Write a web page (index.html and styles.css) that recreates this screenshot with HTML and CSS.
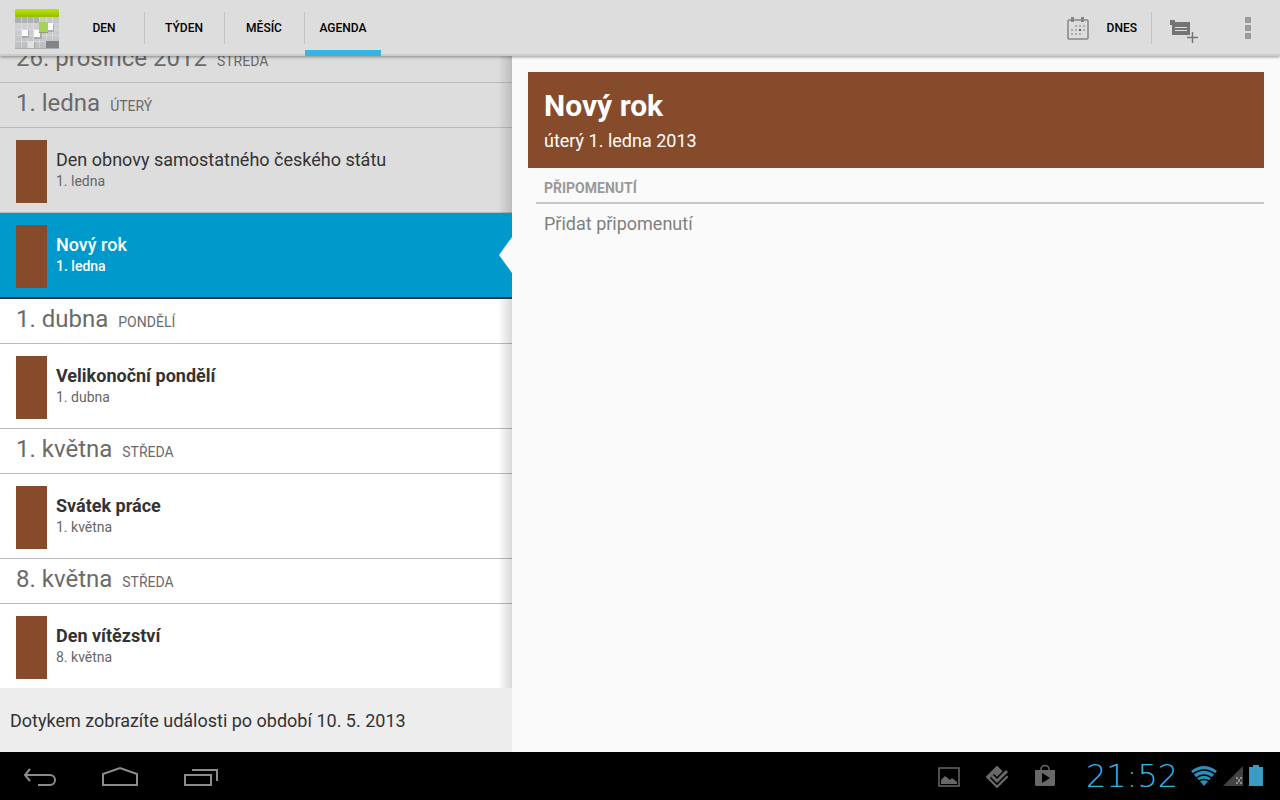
FILE: index.html
```
<!DOCTYPE html>
<html lang="cs">
<head>
    <meta charset="UTF-8">
    <meta name="viewport" content="width=device-width, initial-scale=1.0">
    <title>Kalendář</title>
    <link rel="stylesheet" href="styles.css">
</head>
<body>
    <header class="action-bar">
        <svg class="app-icon" width="46" height="42" viewBox="0 0 46 42" aria-hidden="true">
            <defs>
                <linearGradient id="green" x1="0" y1="0" x2="0" y2="1">
                    <stop offset="0" stop-color="#c0e400"/>
                    <stop offset="1" stop-color="#94bd00"/>
                </linearGradient>
                <linearGradient id="page" x1="0" y1="0" x2="0" y2="1">
                    <stop offset="0" stop-color="#dcddde"/>
                    <stop offset="1" stop-color="#bcbec0"/>
                </linearGradient>
            </defs>
            <rect x="1" y="2" width="44" height="38" rx="1" fill="url(#page)"/>
            <path d="M1 9h24v6H1z" fill="#aeb0b2"/>
            <path d="M25 9h20v6H25z" fill="#c6c8ca"/>
            <path d="M7.500 9v31M13.500 9v31M19.500 9v31M25.500 9v31M32.500 9v31M38.500 9v31M1 21.500h44M1 27.500h44M1 33.500h44" stroke="#eeeeee" stroke-opacity="0.400" fill="none"/>
            <path d="M32 33h13v7H32z" fill="#828486"/>
            <path d="M8 22h7v8H8zM20 23h8v8h-8zM34 16h6v8h-6zM14 34h7v7h-7z" fill="#8b8d8f" opacity="0.500"/>
            <path d="M8 22h6v6H8zM20 22h6v7h-6zM34 15h5v7h-5z" fill="#fafafa"/>
            <path d="M14 33h6v7h-6z" fill="#e0e1e2"/>
            <rect x="25" y="14" width="9" height="11" fill="#8f9a80"/>
            <rect x="25" y="14" width="9" height="10" fill="#a5d354"/>
            <rect x="1" y="1" width="44" height="8" rx="1" fill="url(#green)"/>
            <path d="M1 40.500h44" stroke="#aaacae"/>
        </svg>
        <nav class="tabs">
            <button class="tab" type="button">DEN</button>
            <button class="tab" type="button">TÝDEN</button>
            <button class="tab" type="button">MĚSÍC</button>
            <button class="tab active" type="button">AGENDA</button>
        </nav>
        <div class="actions">
            <button class="today" type="button">
                <svg width="24" height="24" viewBox="0 0 24 24" aria-hidden="true">
                    <rect x="2" y="4" width="20" height="19" rx="1" fill="none" stroke="#858585" stroke-width="1.500"/>
                    <path d="M5 1h3v5H5zM15 1h3v5h-3z" fill="#858585"/>
                    <path d="M9 9h2v2H9zM13 9h2v2h-2zM17 9h2v2h-2zM5 13h2v2H5zM9 13h2v2H9zM17 13h2v2h-2zM5 17h2v2H5zM9 17h2v2H9zM13 17h2v2h-2z" fill="#acacac"/>
                    <path d="M13 13h2v2h-2z" fill="#606060"/>
                </svg>
                <span>DNES</span>
            </button>
            <button class="icon-button add" type="button" aria-label="Nová událost">
                <svg width="28" height="24" viewBox="0 0 28 24" aria-hidden="true">
                    <path d="M0 1h5v2h15v13H2V6H0z" fill="#747474"/>
                    <path d="M5 8.500h12M5 11.500h12" stroke="#dddddd"/>
                    <path d="M22.500 13.500v10M17 18.500h11" stroke="#dddddd" stroke-width="4"/>
                    <path d="M22.500 13v11M17 18.500h11" stroke="#747474" stroke-width="1.500"/>
                </svg>
            </button>
            <button class="icon-button more" type="button" aria-label="Další možnosti">
                <svg width="6" height="22" viewBox="0 0 6 22" aria-hidden="true">
                    <path d="M0 0h6v6H0zM0 8h6v6H0zM0 16h6v6H0z" fill="#999999"/>
                </svg>
            </button>
        </div>
    </header>

    <main class="content">
        <section class="agenda">
            <div class="list">
                <h2 class="day past">26. prosince 2012 <small>STŘEDA</small></h2>
                <h2 class="day past">1. ledna <small>ÚTERÝ</small></h2>
                <article class="event past">
                    <div class="color"></div>
                    <div>
                        <h3>Den obnovy samostatného českého státu</h3>
                        <p>1. ledna</p>
                    </div>
                </article>
                <article class="event selected">
                    <div class="color"></div>
                    <div>
                        <h3>Nový rok</h3>
                        <p>1. ledna</p>
                    </div>
                </article>
                <h2 class="day">1. dubna <small>PONDĚLÍ</small></h2>
                <article class="event">
                    <div class="color"></div>
                    <div>
                        <h3>Velikonoční pondělí</h3>
                        <p>1. dubna</p>
                    </div>
                </article>
                <h2 class="day">1. května <small>STŘEDA</small></h2>
                <article class="event">
                    <div class="color"></div>
                    <div>
                        <h3>Svátek práce</h3>
                        <p>1. května</p>
                    </div>
                </article>
                <h2 class="day">8. května <small>STŘEDA</small></h2>
                <article class="event">
                    <div class="color"></div>
                    <div>
                        <h3>Den vítězství</h3>
                        <p>8. května</p>
                    </div>
                </article>
            </div>
            <button class="load-more" type="button">Dotykem zobrazíte události po období 10. 5. 2013</button>
        </section>

        <section class="detail">
            <div class="detail-head">
                <h1>Nový rok</h1>
                <p>úterý 1. ledna 2013</p>
            </div>
            <h4 class="reminders">PŘIPOMENUTÍ</h4>
            <button class="add-reminder" type="button">Přidat připomenutí</button>
        </section>
    </main>

    <footer class="system-bar">
        <div class="nav-buttons">
            <button type="button" aria-label="Zpět">
                <svg width="40" height="24" viewBox="0 0 40 24" fill="none" stroke="#8c8c8c" stroke-width="2" aria-hidden="true">
                    <path d="M5 11h25a5 5 0 0 1 0 10H18M10 5L5 11l5 6"/>
                </svg>
            </button>
            <button type="button" aria-label="Domů">
                <svg width="40" height="24" viewBox="0 0 40 24" fill="none" stroke="#8c8c8c" stroke-width="2" aria-hidden="true">
                    <path d="M3 21V10l17-6 17 6v11z"/>
                </svg>
            </button>
            <button type="button" aria-label="Poslední aplikace">
                <svg width="40" height="24" viewBox="0 0 40 24" fill="none" stroke="#8c8c8c" stroke-width="2" aria-hidden="true">
                    <path d="M5 11h26v10H5zM12 6h25v11"/>
                </svg>
            </button>
        </div>
        <div class="status">
            <svg width="24" height="24" viewBox="0 0 24 24" aria-hidden="true">
                <rect x="2" y="4" width="20" height="18" fill="none" stroke="#686868" stroke-width="1.500"/>
                <path d="M4 20v-4l4-4 5 4 2-2 5 4v2z" fill="#686868"/>
            </svg>
            <svg width="24" height="24" viewBox="0 0 24 24" aria-hidden="true">
                <path d="M12 3L22 13 12 23 2 13z" fill="#686868" stroke="#686868" stroke-width="2" stroke-linejoin="round"/>
                <path d="M7 12l5 5L22 7" fill="none" stroke="#000000" stroke-width="6"/>
                <path d="M7 12l5 5L22 7" fill="none" stroke="#686868" stroke-width="3"/>
            </svg>
            <svg width="24" height="24" viewBox="0 0 24 24" aria-hidden="true">
                <path d="M2 6h20v15l-1 1H3l-1-1z" fill="#686868"/>
                <path d="M8 7V5a4 3.500 0 0 1 8 0v2" fill="none" stroke="#686868" stroke-width="1.500"/>
                <path d="M9 9v10l8-5z" fill="#000000"/>
            </svg>
            <time class="clock">21:52</time>
            <svg class="wifi" width="26" height="22" viewBox="0 0 26 22" aria-hidden="true">
                <path d="M0 6Q13-4 26 6L13 21z" fill="#2b90b8"/>
                <path d="M2 9Q13 1 24 9M5 13Q13 7 21 13M8 16Q13 13 18 16" fill="none" stroke="#000000" stroke-width="1.500"/>
            </svg>
            <svg class="signal" width="20" height="22" viewBox="0 0 20 22" aria-hidden="true">
                <path d="M0 21L20 1v20z" fill="#424242"/>
                <path d="M13 12h2v2h2v-2h2v2h-2v3h2v2h-2v-2h-2v2h-2v-2h2v-3h-2z" fill="#8e8e8e"/>
            </svg>
            <svg width="14" height="22" viewBox="0 0 14 22" aria-hidden="true">
                <path d="M0 2h4V0h6v2h4v19H0z" fill="#3a9bc5"/>
            </svg>
        </div>
    </footer>
</body>
</html>
```
FILE: styles.css
```
* {
    box-sizing: border-box;
}

body {
    margin: 0;
    height: 100vh;
    display: flex;
    flex-direction: column;
    font-family: Roboto, "Noto Sans", sans-serif;
    background-color: #fafafa;
    color: #333333;
    overflow: hidden;
}

h1, h2, h3, h4, p {
    margin: 0;
    font-weight: 400;
}

button {
    border: none;
    padding: 0;
    background: none;
    font-family: inherit;
    color: inherit;
    cursor: pointer;
}

svg {
    display: block;
    flex-shrink: 0;
}

/* Top bar */
.action-bar {
    height: 56px;
    flex-shrink: 0;
    display: flex;
    align-items: center;
    padding-left: 14px;
    background-color: #dddddd;
    border-bottom: 2px solid #cccccc;
    box-shadow: 0 1px 3px rgba(0, 0, 0, 0.4);
    z-index: 1;
}

.app-icon {
    margin: 4px 5px 0 0;
}

.tabs {
    display: flex;
    height: 56px;
    align-self: flex-start;
}

.tab {
    width: 80px;
    padding-right: 2px;
    font-size: 12px;
    font-weight: 500;
    color: #000000;
    background: linear-gradient(#c2c2c2, #c2c2c2) no-repeat right 12px / 1px 32px;
}

.tab.active {
    width: 76px;
    padding: 6px 0 0;
    border-bottom: 6px solid #33b5e5;
    background: none;
}

.actions {
    display: flex;
    align-items: center;
    margin-left: auto;
}

.today {
    display: flex;
    align-items: center;
    gap: 17px;
    height: 32px;
    margin-top: 2px;
    padding-right: 14px;
    font-size: 12px;
    font-weight: 500;
    color: #000000;
    border-right: 1px solid #c2c2c2;
}

.icon-button {
    display: flex;
    align-items: center;
    justify-content: center;
    width: 64px;
    height: 48px;
}

.add {
    padding-top: 8px;
}

.more {
    padding-top: 2px;
}

/* Event list */
.content {
    flex: 1;
    min-height: 0;
    display: grid;
    grid-template-columns: 2fr 3fr;
}

.agenda {
    display: flex;
    flex-direction: column;
    min-height: 0;
    background-color: #ffffff;
}

.list {
    position: relative;
    flex: 1;
    min-height: 0;
    display: flex;
    flex-direction: column;
    justify-content: flex-end;
    overflow: hidden;
}

/* Shade along the right edge of the list */
.list::after {
    content: "";
    position: absolute;
    top: 0;
    right: 0;
    bottom: 0;
    width: 14px;
    background: linear-gradient(to right, rgba(0, 0, 0, 0), rgba(0, 0, 0, 0.15));
}

.day {
    flex-shrink: 0;
    height: 45px;
    padding: 0 16px;
    font-size: 24px;
    line-height: 40px;
    color: #6a6a6a;
    border-bottom: 1px solid #bbbbbb;
}

.day small {
    font-size: 14px;
    margin-left: 4px;
}

.event {
    flex-shrink: 0;
    display: flex;
    gap: 9px;
    padding: 12px 16px 9px;
    border-bottom: 1px solid #bbbbbb;
}

.event:last-child {
    border-bottom: none;
}

.past {
    background-color: #dddddd;
}

.color {
    width: 31px;
    height: 63px;
    background-color: #854b2b;
}

.event h3 {
    padding-top: 8px;
    font-size: 18px;
    line-height: 24px;
    font-weight: 700;
}

.event p {
    font-size: 14px;
    line-height: 18px;
    color: #666666;
}

.event.past h3 {
    font-weight: 400;
}

.event.selected {
    position: relative;
    z-index: 1;
    background-color: #0099cc;
    border-bottom: 2px solid #333333;
}

.event.selected h3,
.event.selected p {
    font-weight: 500;
    color: #ffffff;
}

/* Notch pointing at the selected event */
.event.selected::after {
    content: "";
    position: absolute;
    top: 24px;
    right: 0;
    width: 13px;
    height: 36px;
    background-color: #fafafa;
    clip-path: polygon(100% 0, 0 50%, 100% 100%);
}

.load-more {
    height: 64px;
    flex-shrink: 0;
    padding: 0 10px;
    font-size: 18px;
    text-align: left;
    background-color: #ededed;
}

/* Event detail */
.detail {
    padding: 16px;
}

.detail-head {
    height: 96px;
    padding: 16px;
    background-color: #854b2b;
    color: #ffffff;
}

.detail-head h1 {
    font-size: 30px;
    line-height: 36px;
    font-weight: 700;
}

.detail-head p {
    font-size: 18px;
    line-height: 34px;
}

.reminders {
    margin-left: 8px;
    padding: 8px 8px 2px;
    font-size: 14px;
    line-height: 24px;
    font-weight: 700;
    color: #999999;
    border-bottom: 2px solid #c8c8c8;
}

.add-reminder {
    padding: 0 16px;
    font-size: 18px;
    line-height: 40px;
    color: #808080;
}

/* System bar */
.system-bar {
    height: 48px;
    flex-shrink: 0;
    display: flex;
    align-items: center;
    justify-content: space-between;
    padding: 0 17px 0 0;
    background-color: #000000;
}

.nav-buttons {
    display: flex;
}

.nav-buttons button {
    display: flex;
    align-items: center;
    justify-content: center;
    width: 80px;
    height: 48px;
}

.status {
    display: flex;
    align-items: center;
    gap: 24px;
}

.clock {
    width: 110px;
    margin-left: -4px;
    font-family: "DejaVu Sans", sans-serif;
    font-size: 32px;
    line-height: 32px;
    font-weight: 200;
    text-align: center;
    color: #33b5e5;
}

.wifi {
    margin-left: -20px;
}

.signal {
    margin: 0 -18px 0 -18px;
}
```
